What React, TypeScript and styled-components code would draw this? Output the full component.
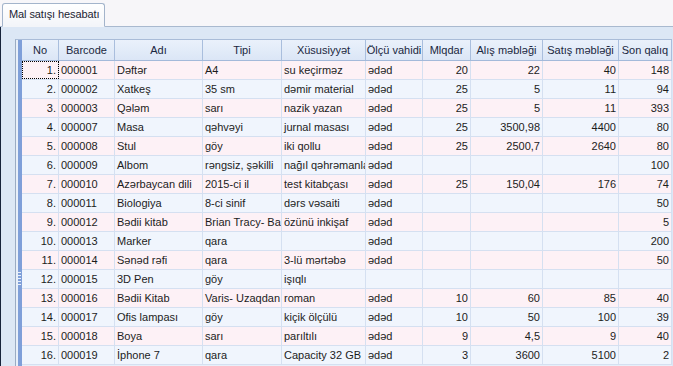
import React from 'react';
import styled, { createGlobalStyle } from 'styled-components';

const GlobalStyle = createGlobalStyle`
  html, body {
    margin: 0;
    padding: 0;
    width: 673px;
    height: 366px;
    overflow: hidden;
    background: #dce7f5;
  }
  * { box-sizing: border-box; }
`;

// column widths, each one includes its 1px right border
const COLS = [37, 56, 88, 79, 84, 57, 48, 72, 76, 53];

const Window = styled.div`
  width: 673px;
  height: 366px;
  display: flex;
  flex-direction: column;
  font-family: 'Liberation Sans', Arial, sans-serif;
  font-size: 11px;
  color: #1c1c1c;
`;

const TabStrip = styled.div`
  height: 27px;
  display: flex;
  align-items: flex-end;
  padding-left: 2px;
  background: #f7f6f9;
  border-bottom: 1px solid #a9b9cf;
`;

const Tab = styled.div`
  height: 24px;
  margin-bottom: -1px;
  padding: 0 5px 3px 6px;
  display: flex;
  align-items: center;
  background: linear-gradient(#ffffff, #f3f5f9);
  border: 1px solid #a3b4cb;
  border-bottom: 1px solid #f3f5f9;
  border-radius: 3px 3px 0 0;
  color: #1c2433;
  letter-spacing: -0.1px;
`;

const Panel = styled.div`
  flex: 1;
  display: flex;
  padding: 12px 0 0 14px;
  background: #dce7f5;
  border-left: 1px solid #17233a;
  overflow: hidden;
`;

const Frame = styled.div`
  position: relative;
  display: flex;
  padding-left: 2px;
  border-left: 1px solid #9aabc3;
  border-top: 1px solid #a9bcd8;
  background: #e8eff9;
`;

const Indicator = styled.div`
  width: 4px;
  background: #7f9fd9;
`;

const Grip = styled.div`
  position: absolute;
  left: 2px;
  top: 232px;
  width: 3px;
  height: 14px;
  background: repeating-linear-gradient(#e9f0fb 0 1px, transparent 1px 3px);
`;

const Table = styled.div`
  display: flex;
  flex-direction: column;
`;

const HeaderRow = styled.div`
  display: flex;
  height: 21px;
  background: linear-gradient(#eaf1fb, #dbe6f6);
  border-bottom: 1px solid #a3b9da;
`;

const HeadCell = styled.div<{ $w: number }>`
  width: ${(p) => p.$w}px;
  display: flex;
  align-items: center;
  justify-content: center;
  border-right: 1px solid #a9bedd;
  color: #1a2740;
  white-space: nowrap;
  overflow: hidden;
`;

const Row = styled.div<{ $odd: boolean }>`
  display: flex;
  height: 19px;
  background: ${(p) => (p.$odd ? '#fdf1f6' : '#f0f5fd')};
  border-bottom: 1px solid #d5e0f1;
`;

const Cell = styled.div<{ $w: number; $right?: boolean; $focus?: boolean }>`
  position: relative;
  width: ${(p) => p.$w}px;
  display: flex;
  align-items: center;
  justify-content: ${(p) => (p.$right ? 'flex-end' : 'flex-start')};
  padding: 0 2px;
  border-right: 1px solid #d5e0f1;
  white-space: nowrap;
  overflow: hidden;
  outline: ${(p) => (p.$focus ? '1px dotted #000' : 'none')};
  outline-offset: -1px;
`;

const headers = [
  'No',
  'Barcode',
  'Adı',
  'Tipi',
  'Xüsusiyyət',
  'Ölçü vahidi',
  'Mlqdar',
  'Alış məbləği',
  'Satış məbləği',
  'Son qalıq',
];

const rightAligned = [true, false, false, false, false, false, true, true, true, true];

// texts as far as the narrow columns show them
const rows: string[][] = [
  ['000001', 'Dəftər', 'A4', 'su keçirməz', 'ədəd', '20', '22', '40', '148'],
  ['000002', 'Xatkeş', '35 sm', 'dəmir material', 'ədəd', '25', '5', '11', '94'],
  ['000003', 'Qələm', 'sarı', 'nazik yazan', 'ədəd', '25', '5', '11', '393'],
  ['000007', 'Masa', 'qəhvəyi', 'jurnal masası', 'ədəd', '25', '3500,98', '4400', '80'],
  ['000008', 'Stul', 'göy', 'iki qollu', 'ədəd', '25', '2500,7', '2640', '80'],
  ['000009', 'Albom', 'rəngsiz, şəkilli', 'nağıl qəhrəmanla', 'ədəd', '', '', '', '100'],
  ['000010', 'Azərbaycan dili', '2015-ci il', 'test kitabçası', 'ədəd', '25', '150,04', '176', '74'],
  ['000011', 'Biologiya', '8-ci sinif', 'dərs vəsaiti', 'ədəd', '', '', '', '50'],
  ['000012', 'Bədii kitab', 'Brian Tracy- Ba', 'özünü inkişaf', 'ədəd', '', '', '', '5'],
  ['000013', 'Marker', 'qara', '', 'ədəd', '', '', '', '200'],
  ['000014', 'Sənəd rəfi', 'qara', '3-lü mərtəbə', 'ədəd', '', '', '', '50'],
  ['000015', '3D Pen', 'göy', 'işıqlı', '', '', '', '', ''],
  ['000016', 'Bədii Kitab', 'Varis- Uzaqdan', 'roman', 'ədəd', '10', '60', '85', '40'],
  ['000017', 'Ofis lampası', 'göy', 'kiçik ölçülü', 'ədəd', '10', '50', '100', '39'],
  ['000018', 'Boya', 'sarı', 'parıltılı', 'ədəd', '9', '4,5', '9', '40'],
  ['000019', 'İphone 7', 'qara', 'Capacity 32 GB', 'ədəd', '3', '3600', '5100', '2'],
];

export default function App() {
  return (
    <Window>
      <GlobalStyle />
      <TabStrip>
        <Tab>Mal satışı hesabatı</Tab>
      </TabStrip>
      <Panel>
        <Frame>
          <Indicator />
          <Grip />
          <Table>
            <HeaderRow>
              {headers.map((h, i) => (
                <HeadCell key={h} $w={COLS[i]}>
                  {h}
                </HeadCell>
              ))}
            </HeaderRow>
            {rows.map((r, ri) => {
              const cells = [`${ri + 1}.`, ...r];
              return (
                <Row key={ri} $odd={ri % 2 === 0}>
                  {cells.map((c, ci) => (
                    <Cell
                      key={ci}
                      $w={COLS[ci]}
                      $right={rightAligned[ci]}
                      $focus={ri === 0 && ci === 0}
                    >
                      {c}
                    </Cell>
                  ))}
                </Row>
              );
            })}
          </Table>
        </Frame>
      </Panel>
    </Window>
  );
}
